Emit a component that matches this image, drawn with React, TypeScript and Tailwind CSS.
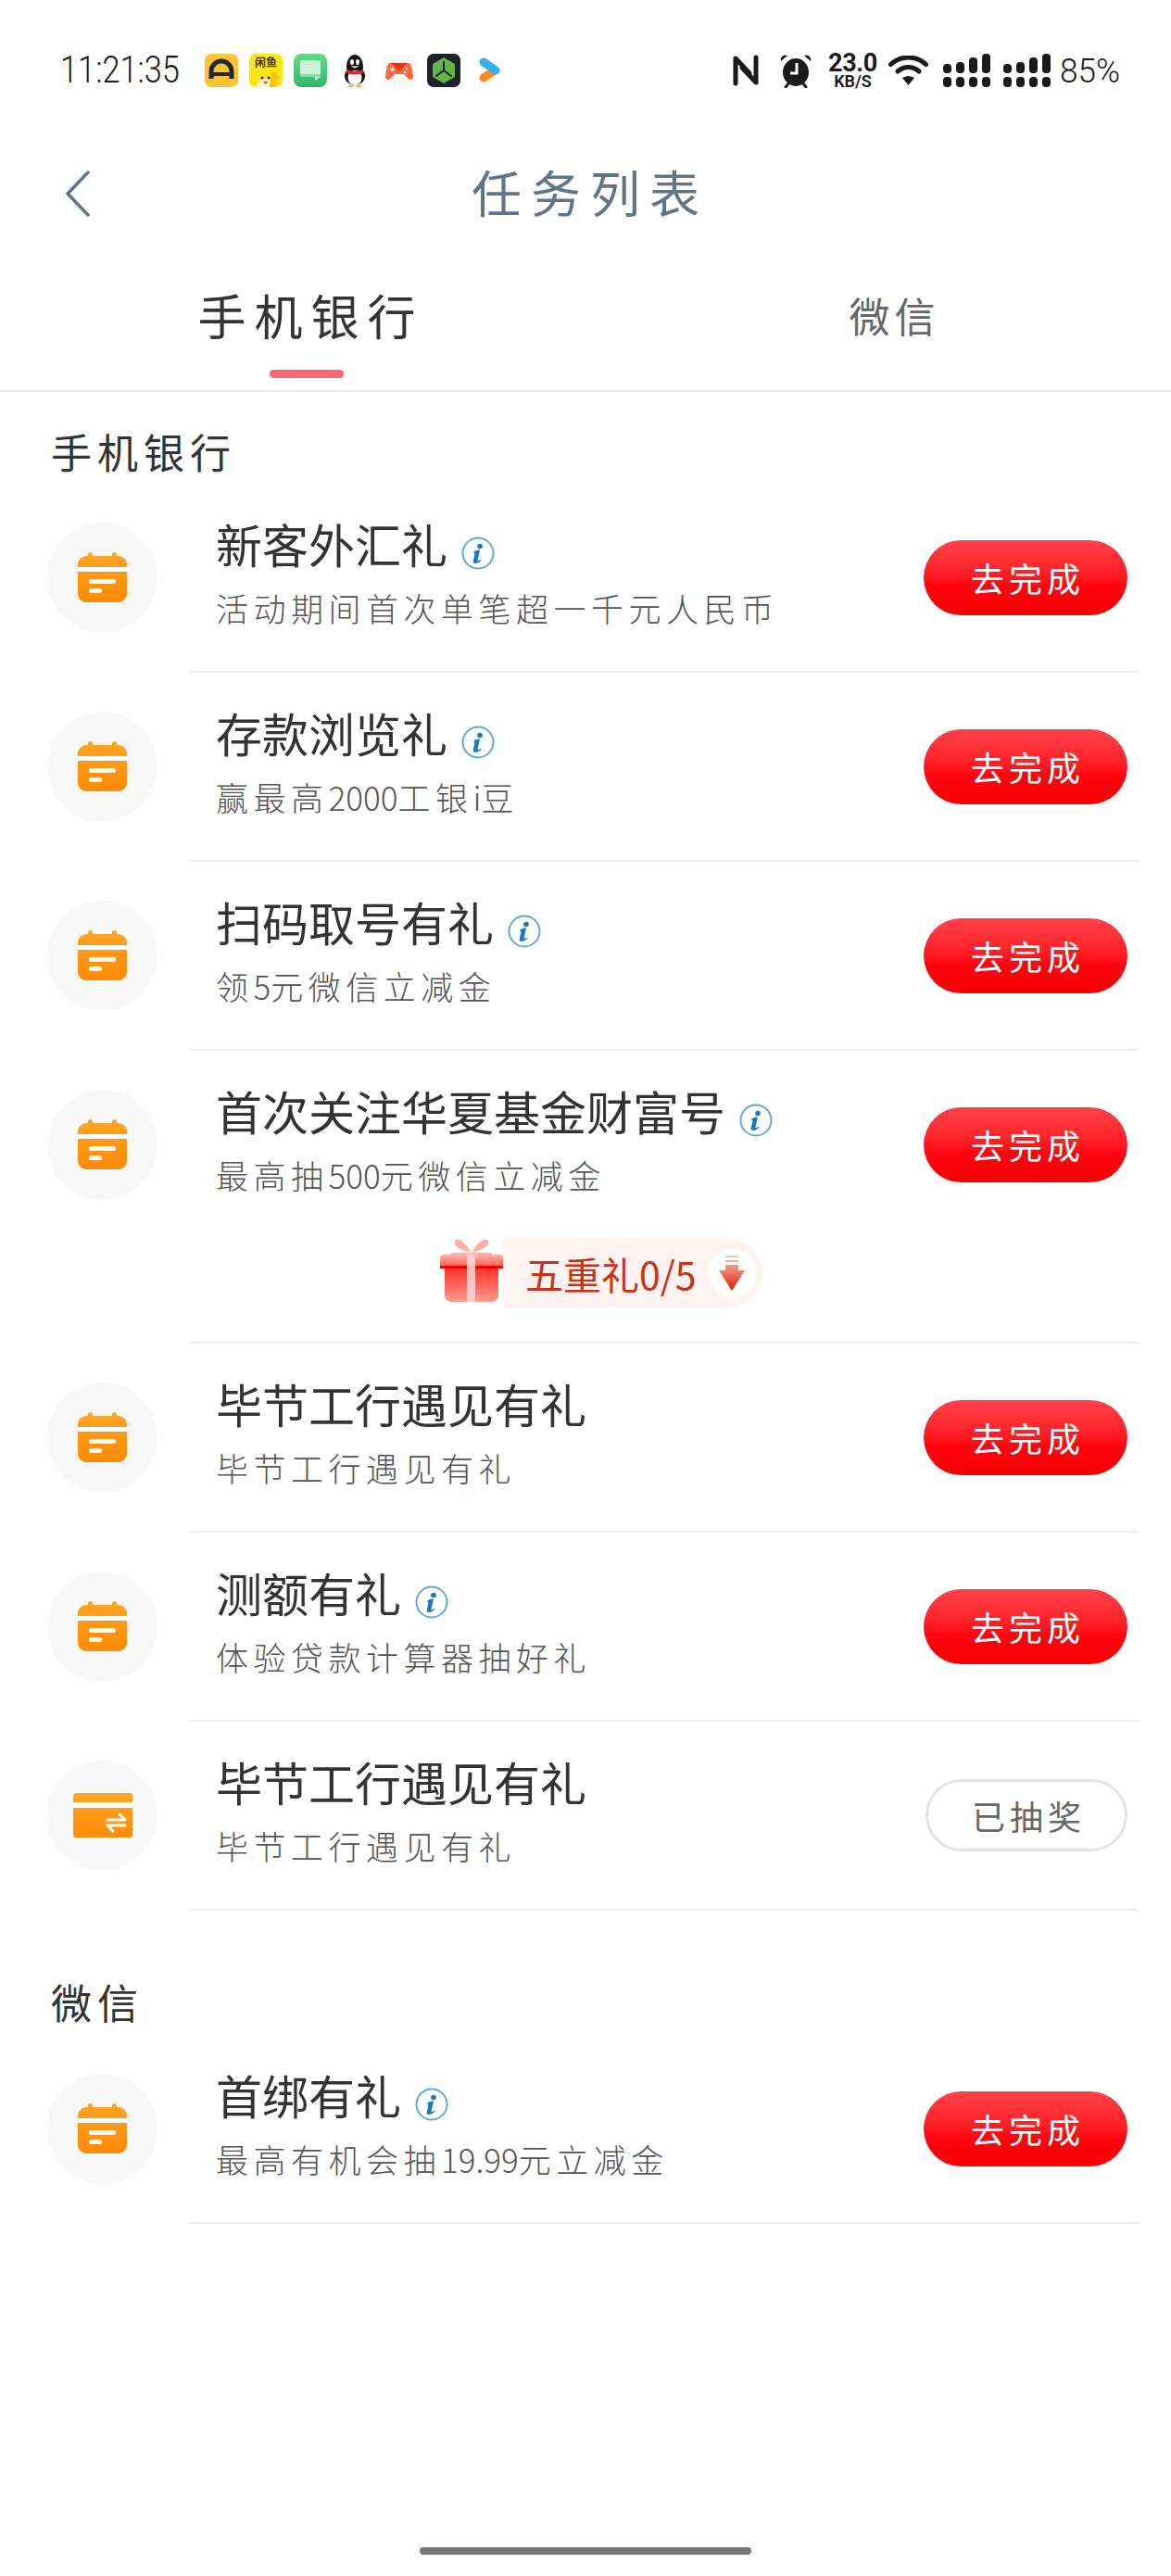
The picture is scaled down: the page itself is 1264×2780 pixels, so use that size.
const FONT = "font-['Noto_Sans_CJK_SC','Noto_Sans',sans-serif]";

type Task = {
  title: string;
  desc: string;
  info?: boolean;
  icon?: "calendar" | "card";
  done?: boolean;
  gift?: boolean;
};

const BANK_TASKS: Task[] = [
  { title: "新客外汇礼", desc: "活动期间首次单笔超一千元人民币", info: true },
  { title: "存款浏览礼", desc: "赢最高2000工银i豆", info: true },
  { title: "扫码取号有礼", desc: "领5元微信立减金", info: true },
  { title: "首次关注华夏基金财富号", desc: "最高抽500元微信立减金", info: true, gift: true },
  { title: "毕节工行遇见有礼", desc: "毕节工行遇见有礼" },
  { title: "测额有礼", desc: "体验贷款计算器抽好礼", info: true },
  { title: "毕节工行遇见有礼", desc: "毕节工行遇见有礼", icon: "card", done: true },
];

const WECHAT_TASKS: Task[] = [
  { title: "首绑有礼", desc: "最高有机会抽19.99元立减金", info: true },
];

export default function App() {
  return (
    <div className={`min-h-[2780px] bg-white ${FONT}`}>
      <StatusBar />

      {/* Title bar */}
      <div className="relative flex h-[110px] items-center justify-center">
        <svg width="26" height="50" viewBox="0 0 26 50" className="absolute left-[71px] top-[32px]" fill="none">
          <path d="M24 2 2 25l22 23" stroke="#607585" strokeWidth="3.5" strokeLinecap="round" strokeLinejoin="round" />
        </svg>
        <h1 className="ml-[10px] text-[54px] leading-[60px] font-normal tracking-[10px] text-[#607585]">任务列表</h1>
      </div>

      {/* Tabs */}
      <div className="flex h-[161px] border-b-2 border-[#ececec]">
        <div className="flex w-[662px] flex-col items-center pt-[48px]">
          <span className="ml-[9px] text-[52px] leading-[60px] tracking-[9px] text-[#333]">手机银行</span>
          <span className="mt-[29px] h-[9px] w-[80px] rounded-full bg-[#fb6470]" />
        </div>
        <div className="flex w-[602px] flex-col items-center pt-[48px]">
          <span className="ml-[5px] text-[44px] leading-[60px] tracking-[5px] text-[#666]">微信</span>
        </div>
      </div>

      <h2 className="mt-[42px] mb-[13px] pl-[55px] text-[44px] leading-[44px] font-normal tracking-[6px] text-[#333]">手机银行</h2>
      {BANK_TASKS.map((t, i) => (
        <TaskRow key={i} task={t} />
      ))}

      <h2 className="mt-[76px] mb-[14px] pl-[55px] text-[44px] leading-[44px] font-normal tracking-[6px] text-[#333]">微信</h2>
      {WECHAT_TASKS.map((t, i) => (
        <TaskRow key={i} task={t} />
      ))}

      {/* Home indicator */}
      <div className="mx-auto mt-[349px] h-[8px] w-[358px] rounded-full bg-[#777]" />
    </div>
  );
}

// digits sit tighter than the CJK text around them
function Desc({ text }: { text: string }) {
  return (
    <p className="mt-[18px] text-[35px] leading-[44px] font-light tracking-[5.5px] text-[#555]">
      {text.split(/([0-9.i]+)/).map((part, i) =>
        i % 2 === 1 ? (
          <span key={i} className="tracking-normal">{part}</span>
        ) : (
          part
        ),
      )}
    </p>
  );
}

function TaskRow({ task }: { task: Task }) {
  return (
    <div className="flex pl-[51px]">
      <div className="flex h-[202px] w-[153px] shrink-0 items-center">
        <div className="flex h-[119px] w-[119px] items-center justify-center rounded-full bg-[#f8f8f8]">
          {task.icon === "card" ? <CardIcon /> : <CalendarIcon />}
        </div>
      </div>
      <div className="mr-[35px] flex-1 border-b-2 border-[#ececec]">
        <div className="flex h-[202px] items-center justify-between pr-[12px] pl-[29px]">
          <div className="pb-[13px]">
            <div className="flex items-center">
              <span className="text-[50px] leading-[60px] text-[#333]">{task.title}</span>
              {task.info && <InfoIcon />}
            </div>
            <Desc text={task.desc} />
          </div>
          {task.done ? (
            <button className="flex h-[78px] w-[218px] items-center justify-center rounded-full border-[3px] border-[#e3e3e3] bg-white pl-[5px] text-[36px] tracking-[5px] text-[#666]">
              已抽奖
            </button>
          ) : (
            <button className="flex h-[81px] w-[220px] items-center justify-center rounded-full bg-gradient-to-b from-[#ff4049] via-[#ff0411] via-60% to-[#f60000] pl-[5px] text-[36px] tracking-[5px] text-white">
              去完成
            </button>
          )}
        </div>
        {task.gift && <GiftPill />}
      </div>
    </div>
  );
}

function GiftPill() {
  return (
    <div className="flex h-[112px] items-start pl-[271px]">
      <GiftIcon />
      <div className="flex h-[75px] w-[280px] items-center rounded-r-full bg-[#fff3f2] pl-[24px]">
        <span className="text-[41px] leading-[48px] whitespace-nowrap text-[#c8341a]">五重礼0/5</span>
        <span className="ml-[12px] flex h-[53px] w-[53px] shrink-0 items-center justify-center rounded-full bg-white">
          <svg width="28" height="38" viewBox="0 0 28 38">
            <defs>
              <linearGradient id="arrowFill" x1="0" y1="0" x2="0" y2="1">
                <stop offset="0" stopColor="#ffc4b8" />
                <stop offset="1" stopColor="#e52100" />
              </linearGradient>
            </defs>
            <path d="M7 0h14v2H7zM7 5h14v2H7zM7 10h14v6h7L14 38 0 16h7z" fill="url(#arrowFill)" />
          </svg>
        </span>
      </div>
    </div>
  );
}

function GiftIcon() {
  return (
    <svg width="68" height="70" viewBox="0 0 68 70" className="shrink-0">
      <defs>
        <linearGradient id="giftBody" x1="0" y1="0" x2="0" y2="1">
          <stop offset="0" stopColor="#ff2a1f" />
          <stop offset="1" stopColor="#ff9c90" />
        </linearGradient>
        <linearGradient id="giftLid" x1="0" y1="0" x2="0" y2="1">
          <stop offset="0" stopColor="#ffb2a8" />
          <stop offset="1" stopColor="#ff5a4e" />
        </linearGradient>
      </defs>
      <path d="M33 15C27 3 18-1 16 3c-2 5 6 11 17 12ZM35 15C41 3 50-1 52 3c2 5-6 11-17 12Z" fill="#ffb0a6" />
      <path d="M12 17h44" stroke="#ffb0a6" strokeWidth="2" />
      <path d="M5 30h58v32a7 7 0 0 1-7 7H12a7 7 0 0 1-7-7z" fill="url(#giftBody)" />
      <path d="M0 22a4 4 0 0 1 4-4h60a4 4 0 0 1 4 4v10H0z" fill="url(#giftLid)" />
      <rect x="0" y="30" width="68" height="3" fill="#f00000" />
      <rect x="29" y="18" width="9" height="51" fill="#ffd8d2" opacity="0.85" />
    </svg>
  );
}

function CalendarIcon() {
  return (
    <svg width="53" height="54" viewBox="0 0 53 54">
      <defs>
        <linearGradient id="orangeFill" x1="0" y1="0" x2="0" y2="1">
          <stop offset="0" stopColor="#ffa526" />
          <stop offset="1" stopColor="#ff8a05" />
        </linearGradient>
      </defs>
      <path
        d="M11 4V2.5a2.5 2.5 0 0 1 5 0V4h21V2.5a2.5 2.5 0 0 1 5 0V4h2a9 9 0 0 1 9 9v32a9 9 0 0 1-9 9H9a9 9 0 0 1-9-9V13a9 9 0 0 1 9-9z"
        fill="url(#orangeFill)"
      />
      <rect x="0" y="16" width="53" height="5" fill="#fff" />
      <rect x="12" y="29" width="29" height="5" rx="2.5" fill="#fff" />
      <rect x="12" y="39" width="14" height="5" rx="2.5" fill="#fff" />
    </svg>
  );
}

function CardIcon() {
  return (
    <svg width="64" height="48" viewBox="0 0 64 48">
      <defs>
        <linearGradient id="cardFill" x1="0" y1="0" x2="0" y2="1">
          <stop offset="0" stopColor="#ffa526" />
          <stop offset="1" stopColor="#ff8c08" />
        </linearGradient>
      </defs>
      <rect width="64" height="48" rx="3" fill="url(#cardFill)" />
      <rect y="10" width="64" height="6" fill="#fff" />
      <path d="M37 29h19l-6-6M56 35H37l6 6" fill="none" stroke="#fff" strokeWidth="3" strokeLinecap="round" strokeLinejoin="round" />
    </svg>
  );
}

function InfoIcon() {
  return (
    <svg width="36" height="36" viewBox="0 0 36 36" className="mt-[23px] ml-[15px] shrink-0">
      <circle cx="18" cy="18" r="16.5" fill="#fff" stroke="#62a9da" strokeWidth="2" />
      <circle cx="20" cy="10.5" r="2.8" fill="#1a78c2" />
      <path
        d="M13.5 16.500c2-1.500 4-2 6.500-2l-2.500 11c-.2 1 .8 1 3.500-.8l.5 1c-2.500 2.300-4.500 3.200-6.500 3.200-2 0-2.600-1.200-2.200-3l1.800-7.500-1 .2z"
        fill="#1a78c2"
      />
    </svg>
  );
}

function StatusBar() {
  return (
    <div className="flex h-[152px] items-center pr-[56px] pl-[65px] text-[#1a1a1a]">
      <div className="w-[156px] shrink-0">
        <span className="inline-block origin-left scale-x-[0.86] font-['Roboto'] text-[40px] leading-none font-light whitespace-nowrap">
          11:21:35
        </span>
      </div>
      <div className="flex gap-[12px]">
        <AppA />
        <AppFish />
        <AppMsg />
        <AppQQ />
        <AppGame />
        <AppHex />
        <AppPlay />
      </div>

      <div className="ml-auto flex items-center">
        <svg width="28" height="34" viewBox="0 0 28 34" fill="none">
          <path d="M3 31V4l15 16M25 3v27L10 14" stroke="#1a1a1a" strokeWidth="5" strokeLinecap="round" strokeLinejoin="round" />
        </svg>
        <svg width="36" height="38" viewBox="0 0 36 38" className="ml-[22px]">
          <ellipse cx="18" cy="21" rx="14" ry="15" fill="#1a1a1a" />
          <path d="M2 9a5 5 0 0 1 7-6zM34 9a5 5 0 0 0-7-6z" fill="#1a1a1a" />
          <path d="M7 37l4-5M29 37l-4-5" stroke="#1a1a1a" strokeWidth="3" strokeLinecap="round" />
          <path d="M19 11v11h-7" fill="none" stroke="#fff" strokeWidth="3" />
        </svg>
        <div className="ml-[16px] flex w-[55px] flex-col items-center font-['Roboto'] font-bold">
          <span className="text-[27px] leading-[21px] tracking-[-0.3px]">23.0</span>
          <span className="mt-[2px] text-[18px] leading-[14px] font-semibold">KB/S</span>
        </div>
        <svg width="43" height="32" viewBox="0 0 43 32" className="ml-[11px]">
          <path d="M2.5 9.500C13-.5 30-.5 40.500 9.500" fill="none" stroke="#1a1a1a" strokeWidth="5" strokeLinecap="round" />
          <path d="M10 17c7-6 16-6 23 0" fill="none" stroke="#1a1a1a" strokeWidth="5" strokeLinecap="round" />
          <path d="M15 24c4-2.500 9-2.500 13 0l-6.500 8z" fill="#1a1a1a" />
        </svg>
        <Signal className="ml-[16px]" />
        <Signal className="ml-[14px]" />
        <span className="ml-[10px] inline-block w-[64px] origin-left scale-x-[0.95] font-['Roboto'] text-[37px] leading-none font-light">
          85%
        </span>
      </div>
    </div>
  );
}

function Signal({ className }: { className?: string }) {
  const tops = [11, 9, 4, 0];
  return (
    <svg width="51" height="36" viewBox="0 0 51 36" className={className}>
      {tops.map((top, i) => (
        <g key={i} fill="#1a1a1a">
          <rect x={i * 14} y={top} width="9" height={21 - top} rx="4" />
          <rect x={i * 14} y="25" width="9" height="11" rx="4" />
        </g>
      ))}
    </svg>
  );
}

function AppA() {
  return (
    <svg width="36" height="36" viewBox="0 0 36 36">
      <rect width="36" height="36" rx="7" fill="#fcc433" />
      <path d="M7 27V19a11 11 0 0 1 22 0v8" fill="none" stroke="#26262c" strokeWidth="5" />
      <path d="M6 20h24v5l-5-1H11l-5 1z" fill="#26262c" />
    </svg>
  );
}

function AppFish() {
  return (
    <div className="relative h-[36px] w-[36px] rounded-[7px] bg-[#ffe60f]">
      <span className="absolute top-[2px] left-0 w-full text-center text-[12px] leading-[13px] font-bold text-[#333]">闲鱼</span>
      <svg width="36" height="36" viewBox="0 0 36 36" className="absolute top-0 left-0">
        <path d="M8 36a10 10 0 0 1 20 0z" fill="#fff6c0" />
        <path d="M24 17l2 3 4-1-1 4 4 2-3 3 1 4-4 4h-5z" fill="#f7c600" />
        <circle cx="14" cy="26" r="1.500" fill="#222" />
        <circle cx="21" cy="26" r="1.500" fill="#222" />
        <path d="M15 30h5l-2 3z" fill="#e8452c" />
      </svg>
    </div>
  );
}

function AppMsg() {
  return (
    <svg width="36" height="36" viewBox="0 0 36 36">
      <defs>
        <linearGradient id="msgBg" x1="0" y1="0" x2="0" y2="1">
          <stop offset="0" stopColor="#5fdc8c" />
          <stop offset="1" stopColor="#2fb868" />
        </linearGradient>
      </defs>
      <rect width="36" height="36" rx="8" fill="url(#msgBg)" />
      <path d="M10 7h16a3 3 0 0 1 3 3v15l-6 4v-4H10a3 3 0 0 1-3-3V10a3 3 0 0 1 3-3z" fill="#cdf0d6" />
      <path d="M7 22h22v3H10a3 3 0 0 1-3-3z" fill="#86dca2" />
    </svg>
  );
}

function AppQQ() {
  return (
    <svg width="36" height="36" viewBox="0 0 36 36">
      <ellipse cx="18" cy="14" rx="9" ry="13" fill="#111" />
      <ellipse cx="18" cy="24" rx="11" ry="10" fill="#111" />
      <ellipse cx="18" cy="26" rx="7.500" ry="8" fill="#fff" />
      <ellipse cx="15" cy="9" rx="2" ry="3" fill="#fff" />
      <ellipse cx="21" cy="9" rx="2" ry="3" fill="#fff" />
      <path d="M13 13h10l-5 3z" fill="#f5b21b" />
      <path d="M9 17c6 2.500 12 2.500 18 0v4c-6 2-12 2-18 0z" fill="#e2222b" />
      <path d="M12 34h5l-2 2h-4zM24 34h-5l2 2h4z" fill="#f5b21b" />
    </svg>
  );
}

function AppGame() {
  return (
    <svg width="36" height="36" viewBox="0 0 36 36">
      <rect width="36" height="36" rx="7" fill="#f8f8f8" />
      <path d="M9 10h18a4 4 0 0 1 4 3l2 11a3 3 0 0 1-5 3l-5-5H13l-5 5a3 3 0 0 1-5-3l2-11a4 4 0 0 1 4-3z" fill="#fa6a3c" />
      <path d="M9 10h18l-9 9z" fill="#e8331f" />
      <path d="M8 17h5M10.500 14.500v5" stroke="#fff" strokeWidth="1.500" />
      <circle cx="26" cy="16" r="1.200" fill="#fff" />
      <circle cx="24" cy="20" r="1.200" fill="#fff" />
    </svg>
  );
}

function AppHex() {
  return (
    <svg width="36" height="36" viewBox="0 0 36 36">
      <rect width="36" height="36" rx="7" fill="#1c2229" />
      <path d="M18 4l12 7v14l-12 7-12-7V11z" fill="#64b347" />
      <path d="M18 18V9M18 18l-8 6M18 18l8 6" stroke="#1c2229" strokeWidth="2" strokeLinecap="round" />
    </svg>
  );
}

function AppPlay() {
  return (
    <svg width="36" height="36" viewBox="0 0 36 36">
      <path d="M25 18 13 26" stroke="#ff8a1c" strokeWidth="9" strokeLinecap="round" />
      <path d="M13 9 26 18" stroke="#35aef5" strokeWidth="9" strokeLinecap="round" />
    </svg>
  );
}
